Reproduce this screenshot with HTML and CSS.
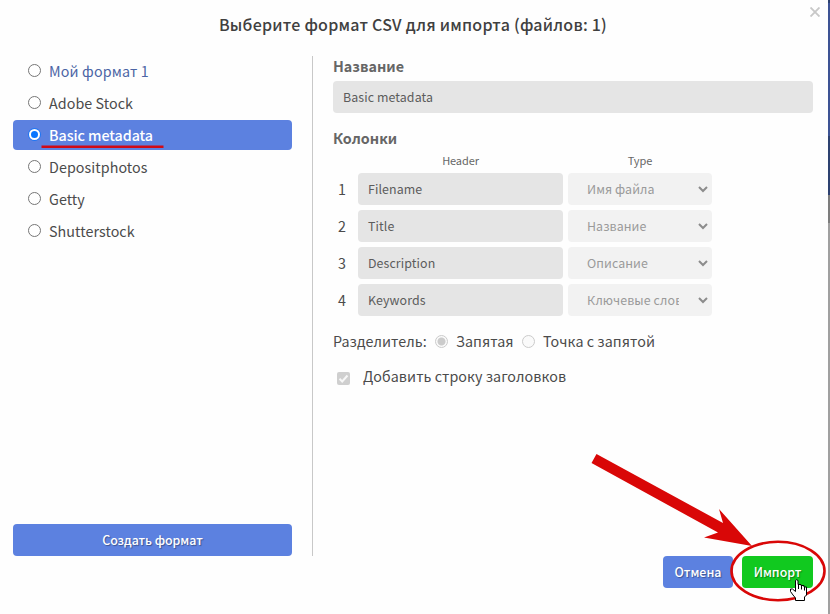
FILE: index.html
```html
<!DOCTYPE html>
<html lang="ru">
<head>
<meta charset="utf-8">
<title>Импорт CSV</title>
<link rel="stylesheet" href="styles.css">
</head>
<body>
<div class="page">
  <div class="dialog">
    <h1 class="title">Выберите формат CSV для импорта (файлов: 1)</h1>
    <svg class="close" viewBox="0 0 10 10"><path d="M.5 .5L9.500 9.500M9.500 .5L.5 9.500"/></svg>
    <div class="body">
      <div class="sidebar">
        <ul class="formats">
          <li class="format own"><i class="radio"></i><span>Мой формат 1</span></li>
          <li class="format"><i class="radio"></i><span>Adobe Stock</span></li>
          <li class="format active"><i class="radio"></i><span>Basic metadata</span></li>
          <li class="format"><i class="radio"></i><span>Depositphotos</span></li>
          <li class="format"><i class="radio"></i><span>Getty</span></li>
          <li class="format"><i class="radio"></i><span>Shutterstock</span></li>
        </ul>
        <button class="btn create">Создать формат</button>
      </div>
      <div class="details">
        <h2 class="label">Название</h2>
        <div class="field name">Basic metadata</div>
        <h2 class="label columns-label">Колонки</h2>
        <div class="grid">
          <span></span><span class="head">Header</span><span class="head">Type</span>
          <span class="num">1</span><div class="field">Filename</div><div class="select"><span>Имя файла</span><svg viewBox="0 0 10 7"><path d="M1 1L5 5L9 1"/></svg></div>
          <span class="num">2</span><div class="field">Title</div><div class="select"><span>Название</span><svg viewBox="0 0 10 7"><path d="M1 1L5 5L9 1"/></svg></div>
          <span class="num">3</span><div class="field">Description</div><div class="select"><span>Описание</span><svg viewBox="0 0 10 7"><path d="M1 1L5 5L9 1"/></svg></div>
          <span class="num">4</span><div class="field">Keywords</div><div class="select"><span>Ключевые слова</span><svg viewBox="0 0 10 7"><path d="M1 1L5 5L9 1"/></svg></div>
        </div>
        <div class="separator"><span class="sep-label">Разделитель:</span><i class="radio disabled checked"></i><span class="comma">Запятая</span><i class="radio disabled"></i><span class="semi">Точка с запятой</span></div>
        <div class="headers"><svg class="check" viewBox="0 0 13 13"><rect width="13" height="13" rx="2"/><path d="M2.5 6.8L5.2 9.5L10.5 3.5"/></svg><span>Добавить строку заголовков</span></div>
      </div>
    </div>
    <div class="footer">
      <button class="btn cancel">Отмена</button>
      <button class="btn import">Импорт</button>
    </div>
  </div>
  <div class="backdrop"></div>
  <svg class="marks" viewBox="0 0 830 614">
    <path class="underline" d="M41.500 146.700H163.500"/>
    <path class="arrow" d="M596.500 454L723 523L719 509L752 546L704 537.500L718 532.500L591.500 463Z"/>
    <ellipse class="ring" cx="778" cy="571" rx="46.500" ry="29.200"/>
    <path class="hand" d="M795.500 580.500Q796.500 579 798 580.500V584.500H801V585.500H804V587H806.500V595L804.500 597V600.500H795.500V598L793 595L790.500 591.500V589H792.500L795.500 591.500V580.500Z"/>
    <path class="fingers" d="M798.500 584.500V589M801.500 585.500V589.500M804.500 587V590.500"/>
  </svg>
</div>
</body>
</html>
```
FILE: styles.css
```css
* { box-sizing: border-box; }
body { margin: 0; font-family: "Noto Sans CJK SC", "Noto Sans", sans-serif; color: #4b4b4b; font-size: 14.300px; }
.page { position: relative; display: flex; width: 830px; height: 614px; overflow: hidden; background: #fefefe; white-space: nowrap; }
.dialog { position: relative; width: 828px; display: flex; flex-direction: column; }
.title { margin: 13px 0 0; height: 23px; line-height: 23px; text-align: center; font-size: 16px; font-weight: 500; color: #404040; padding-right: 2px; letter-spacing: .24px; }
.close { position: absolute; left: 810px; top: 7px; width: 10px; height: 10px; }
.close path { stroke: #c8c8c8; stroke-width: 1.900; }
.body { display: flex; margin-top: 20px; height: 500px; }
.sidebar { width: 313px; padding: 0 20px 0 13px; border-right: 1px solid #c8c8c8; display: flex; flex-direction: column; justify-content: space-between; }
.formats { list-style: none; margin: 0; padding: 0; display: flex; flex-direction: column; gap: 2px; }
.format { height: 30px; display: flex; align-items: center; padding-left: 15px; border-radius: 4px; letter-spacing: .06px; line-height: 30px; }
.format span { margin-left: 8px; }
.own { color: #4c65a5; letter-spacing: .14px; }
.active { background: #5c81e0; color: #fff; }
.active span { font-weight: 500; letter-spacing: -.06px; }
.radio { width: 13px; height: 13px; border: 1px solid #767676; border-radius: 50%; background: #fff; flex: none; margin-bottom: 2px; }
.active .radio { border: 2px solid #fff; background: #0875ff; box-shadow: 0 0 0 1px #1d76f4; width: 11px; height: 11px; margin: 0 1px 2px; }
.btn { height: 32px; padding: 0; border: 0; border-radius: 4px; background: #5c81e0; color: #fff; font: 500 12.400px/32px "Noto Sans CJK SC", sans-serif; text-shadow: 1px 1px 1px rgba(0,0,0,.35); }
.create { letter-spacing: -.05px; }
.details { padding-left: 20px; width: 500px; }
.label { margin: 0; height: 25px; line-height: 20px; font-size: 14.300px; color: #666; letter-spacing: .02px; }
.columns-label { margin-top: 15px; }
.field { height: 32px; border-radius: 4px; background: #e5e5e5; padding-left: 10px; font-size: 12.400px; line-height: 32px; color: #5c5c5c; letter-spacing: .09px; }
.grid { display: grid; grid-template-columns: 20px 205px 144px; column-gap: 5px; row-gap: 5px; grid-template-rows: 15px repeat(4, 32px); }
.head { text-align: center; font-size: 11px; line-height: 15px; color: #666; letter-spacing: -.1px; }
.num { line-height: 31px; padding-left: 5px; }
.select { height: 32px; border-radius: 4px; background: #f2f2f2; color: #9a9a9a; font-size: 12.400px; line-height: 32px; padding: 0 4px 0 19px; display: flex; justify-content: space-between; align-items: center; letter-spacing: .08px; }
.select span { width: 92px; overflow: hidden; }
.select svg { width: 10px; height: 7px; }
.select path { fill: none; stroke: #8c8c8c; stroke-width: 2; }
.separator { display: flex; align-items: center; height: 22px; line-height: 20px; margin-top: 15px; letter-spacing: .06px; }
.separator span { margin-bottom: 2px; }
.disabled { border-color: #cbcbcb; background: #fafafa; }
.checked { background: radial-gradient(circle, #cbcbcb 3.500px, #fafafa 4.500px); }
.sep-label { width: 102px; }
.comma { margin-left: 8px; width: 66px; }
.separator .semi { margin-left: 8px; }
.headers { display: flex; align-items: center; height: 22px; margin-top: 13px; letter-spacing: .08px; padding-left: 4px; }
.headers span { margin-bottom: 4px; }
.check { width: 13px; height: 13px; margin: 3px 13px 0 0; }
.check rect { fill: #cfcfcf; }
.check path { fill: none; stroke: #f7f7f7; stroke-width: 2; }
.footer { display: flex; justify-content: flex-end; padding-right: 15px; gap: 9px; }
.cancel { width: 70px; }
.import { width: 71px; background: #11c91f; }
.backdrop { width: 2px; background: linear-gradient(#2d4170 0 3px, #3d5394 3px 136px, #2d4170 136px 195px, #7d7d7d 195px 223px, #a0a0a0 223px); }
.marks { position: absolute; inset: 0; width: 830px; height: 614px; }
.underline { stroke: #d10a16; stroke-width: 2.600; }
.arrow { fill: #d90707; }
.ring { fill: none; stroke: #d90707; stroke-width: 2.600; }
.hand { fill: #fff; stroke: #000; stroke-width: 1; }
.fingers { stroke: #000; stroke-width: 1; }
```
